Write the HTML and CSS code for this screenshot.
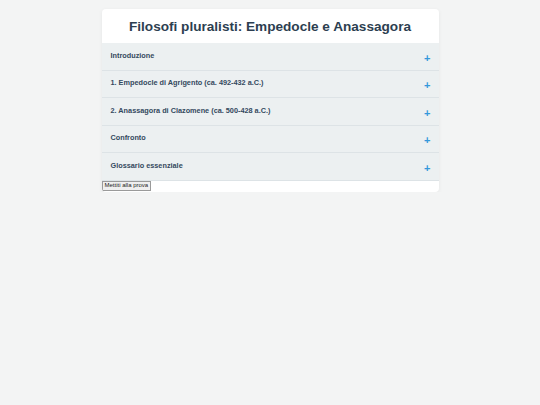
FILE: index.html
```html
<!DOCTYPE html>
<html lang="it">
<head>
<meta charset="utf-8">
<title>Filosofi pluralisti</title>
<link rel="stylesheet" href="styles.css">
</head>
<body>
<div class="container">
  <header class="header">
    <h1 class="title">Filosofi pluralisti: Empedocle e Anassagora</h1>
  </header>
  <div class="accordion">
    <div class="item"><span class="label">Introduzione</span><span class="plus">+</span></div>
    <div class="item"><span class="label">1. Empedocle di Agrigento (ca. 492-432 a.C.)</span><span class="plus">+</span></div>
    <div class="item"><span class="label">2. Anassagora di Clazomene (ca. 500-428 a.C.)</span><span class="plus">+</span></div>
    <div class="item"><span class="label">Confronto</span><span class="plus">+</span></div>
    <div class="item"><span class="label">Glossario essenziale</span><span class="plus">+</span></div>
  </div>
  <div class="footer"><button class="btn">Mettiti alla prova</button></div>
</div>
</body>
</html>
```
FILE: styles.css
```css
html, body {
  margin: 0;
  padding: 0;
  background: #f3f4f4;
  font-family: "Liberation Sans", Arial, sans-serif;
}
body {
  padding-top: 9px;
}
.container {
  width: 337px;
  margin: 0 auto;
  background: #ffffff;
  border-radius: 4px;
  box-shadow: 0 1px 4px rgba(0,0,0,0.06);
  overflow: hidden;
}
.header {
  height: 34px;
  display: flex;
  align-items: center;
  justify-content: center;
}
.title {
  margin: 0;
  font-size: 13.6px;
  font-weight: bold;
  color: #2c3e50;
}
.item {
  background: #ecf0f1;
  border-bottom: 1px solid #dde3e6;
  display: flex;
  justify-content: space-between;
  align-items: center;
  padding: 0 8px 0 9px;
  box-sizing: border-box;
  height: 27.5px;
}
.label {
  font-size: 7.3px;
  font-weight: bold;
  color: #34495e;
  margin-top: -2px;
}
.plus {
  font-size: 11px;
  font-weight: bold;
  color: #3498db;
  margin-top: 3px;
}
.footer {
  display: flex;
  height: 11px;
}
.btn {
  font-size: 6px;
  font-family: "Liberation Sans", Arial, sans-serif;
  color: #222;
  background: #efefef;
  border: 1px solid #9a9a9a;
  border-radius: 0;
  padding: 0 2px;
  margin: 0;
  height: 10px;
  line-height: 7px;
}
```
